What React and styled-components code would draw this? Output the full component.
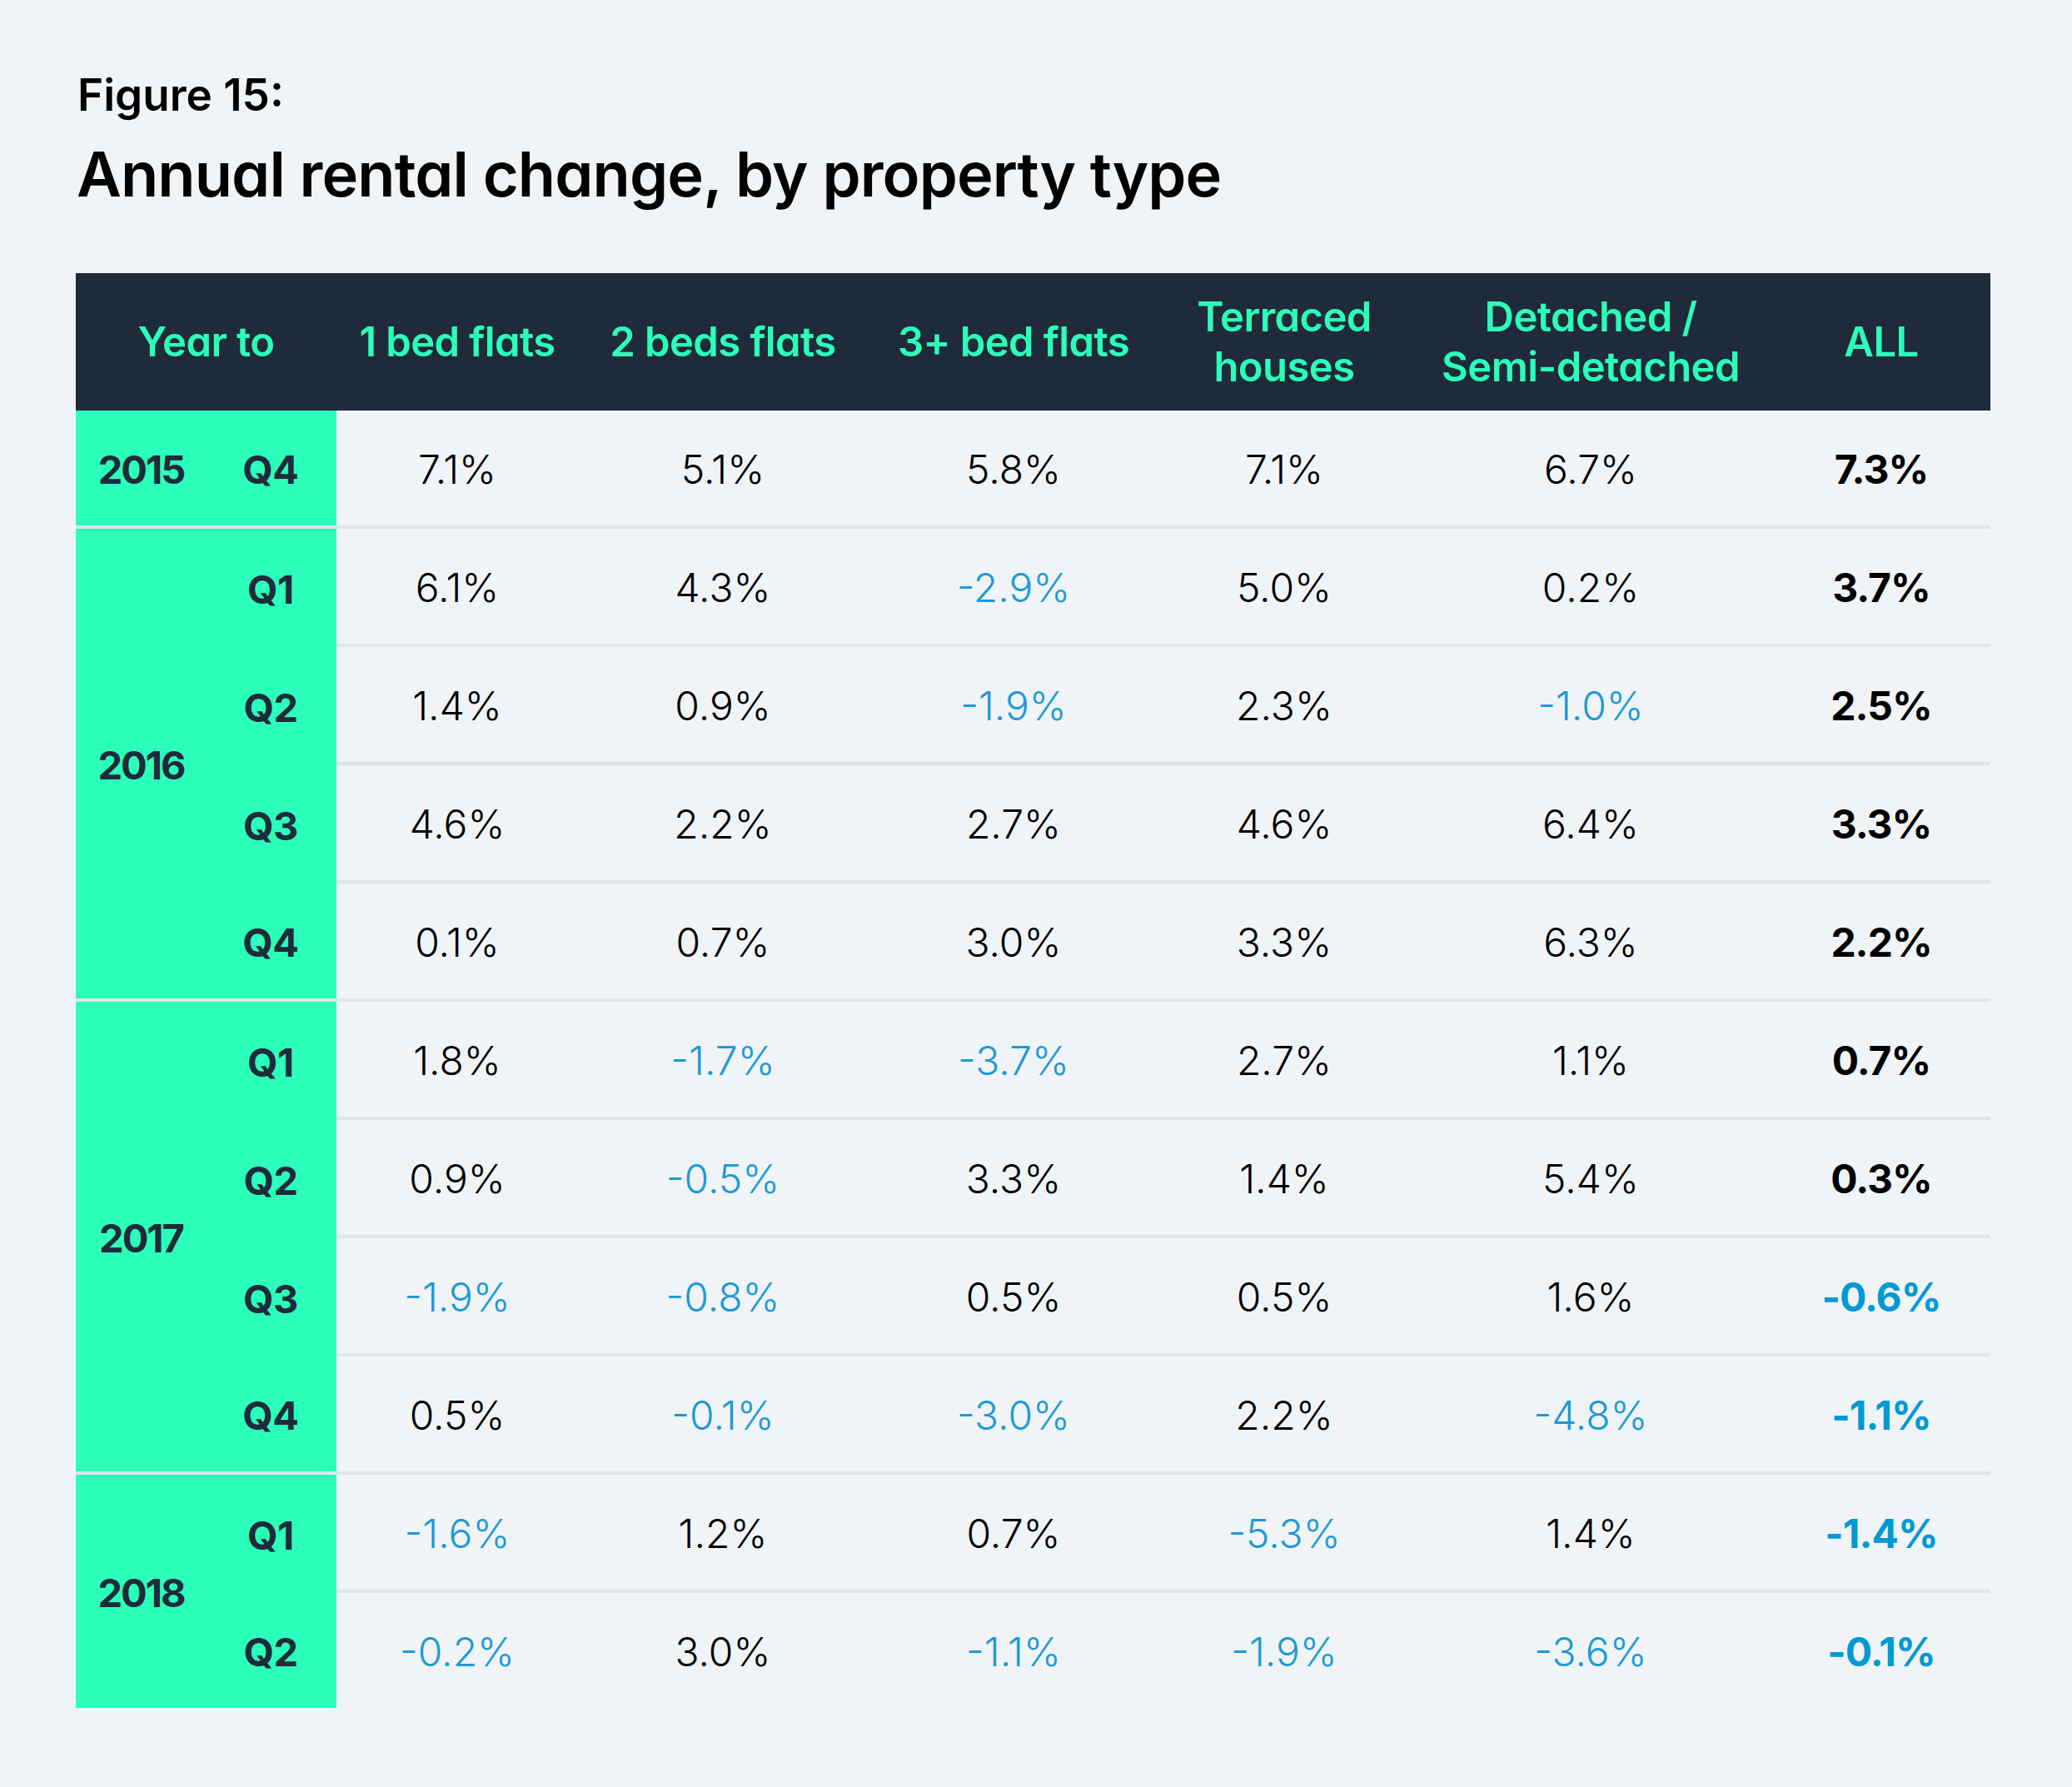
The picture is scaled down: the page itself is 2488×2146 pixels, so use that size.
import React from "react";
import styled, { createGlobalStyle } from "styled-components";

const Global = createGlobalStyle`
  html, body { margin: 0; padding: 0; background: #f0f4f7; }
  body { font-family: Inter, "Liberation Sans", sans-serif; font-feature-settings: "cv11"; }
`;

const Page = styled.div`
  padding: 82px 98px 80px 91px;
  width: 2301px;
`;

const Kicker = styled.div`
  font-size: 53px;
  font-weight: 600;
  color: #000;
  line-height: 64px;
  letter-spacing: 0;
  padding-left: 2px;
`;

const Title = styled.h1`
  margin: 18px 0 0;
  font-size: 74px;
  font-weight: 600;
  color: #000;
  line-height: 90px;
  letter-spacing: -0.9px;
  padding-left: 1px;
`;

const Table = styled.div`
  margin-top: 74px;
  display: grid;
  grid-template-columns: 157px 156px 290px 348px 350px 300px 436px 262px;
  grid-template-rows: 165px repeat(10, 142px) 138px;
`;

const HeadCell = styled.div`
  background: #1f2a3a;
  color: #2cffb9;
  font-size: 49px;
  font-weight: 600;
  letter-spacing: -0.6px;
  line-height: 60px;
  display: flex;
  align-items: center;
  justify-content: center;
  text-align: center;
  grid-column: ${(p) => (p.$span ? `span ${p.$span}` : "auto")};
`;

const YearCell = styled.div`
  background: #2cffb9;
  color: #1f2a3a;
  font-size: 47px;
  font-weight: 700;
  letter-spacing: -2px;
  display: flex;
  align-items: center;
  justify-content: center;
  padding-top: 3px;
  grid-row: span ${(p) => p.$rows};
  border-bottom: ${(p) => (p.$sep ? "4px solid #dfe5e8" : "none")};
  box-sizing: border-box;
`;

const QuarterCell = styled(YearCell)`
  grid-row: auto;
  letter-spacing: -0.5px;
  padding-right: 2px;
`;

const DataCell = styled.div`
  display: flex;
  align-items: center;
  justify-content: center;
  padding-top: 3px;
  font-size: 48px;
  font-weight: ${(p) => (p.$bold ? 700 : 300)};
  letter-spacing: ${(p) => (p.$bold ? "-1px" : "0")};
  color: ${(p) => (p.$neg ? (p.$bold ? "#0099d4" : "#1d9ad6") : "#000")};
  border-bottom: ${(p) => (p.$last ? "none" : "4px solid #dfe5e8")};
  box-sizing: border-box;
`;

const headers = [
  "1 bed flats",
  "2 beds flats",
  "3+ bed flats",
  ["Terraced", "houses"],
  ["Detached /", "Semi-detached"],
  "ALL",
];

const groups = [
  { year: "2015", rows: [["Q4", "7.1%", "5.1%", "5.8%", "7.1%", "6.7%", "7.3%"]] },
  {
    year: "2016",
    rows: [
      ["Q1", "6.1%", "4.3%", "-2.9%", "5.0%", "0.2%", "3.7%"],
      ["Q2", "1.4%", "0.9%", "-1.9%", "2.3%", "-1.0%", "2.5%"],
      ["Q3", "4.6%", "2.2%", "2.7%", "4.6%", "6.4%", "3.3%"],
      ["Q4", "0.1%", "0.7%", "3.0%", "3.3%", "6.3%", "2.2%"],
    ],
  },
  {
    year: "2017",
    rows: [
      ["Q1", "1.8%", "-1.7%", "-3.7%", "2.7%", "1.1%", "0.7%"],
      ["Q2", "0.9%", "-0.5%", "3.3%", "1.4%", "5.4%", "0.3%"],
      ["Q3", "-1.9%", "-0.8%", "0.5%", "0.5%", "1.6%", "-0.6%"],
      ["Q4", "0.5%", "-0.1%", "-3.0%", "2.2%", "-4.8%", "-1.1%"],
    ],
  },
  {
    year: "2018",
    rows: [
      ["Q1", "-1.6%", "1.2%", "0.7%", "-5.3%", "1.4%", "-1.4%"],
      ["Q2", "-0.2%", "3.0%", "-1.1%", "-1.9%", "-3.6%", "-0.1%"],
    ],
  },
];

export default function App() {
  return (
    <Page>
      <Global />
      <Kicker>Figure 15:</Kicker>
      <Title>Annual rental change, by property type</Title>
      <Table>
        <HeadCell $span={2}>Year to</HeadCell>
        {headers.map((h, i) => (
          <HeadCell key={i}>
            {Array.isArray(h) ? (
              <span>
                {h[0]}
                <br />
                {h[1]}
              </span>
            ) : (
              h
            )}
          </HeadCell>
        ))}
        {groups.map((g, gi) => {
          const lastGroup = gi === groups.length - 1;
          return (
            <React.Fragment key={g.year}>
              <YearCell $rows={g.rows.length} $sep={!lastGroup}>
                {g.year}
              </YearCell>
              {g.rows.map((r, ri) => {
                const lastRow = lastGroup && ri === g.rows.length - 1;
                const groupEnd = ri === g.rows.length - 1 && !lastGroup;
                return (
                  <React.Fragment key={ri}>
                    <QuarterCell $rows={1} $sep={groupEnd}>
                      {r[0]}
                    </QuarterCell>
                    {r.slice(1).map((v, vi) => (
                      <DataCell
                        key={vi}
                        $neg={v.startsWith("-")}
                        $bold={vi === 5}
                        $last={lastRow}
                      >
                        {v}
                      </DataCell>
                    ))}
                  </React.Fragment>
                );
              })}
            </React.Fragment>
          );
        })}
      </Table>
    </Page>
  );
}
